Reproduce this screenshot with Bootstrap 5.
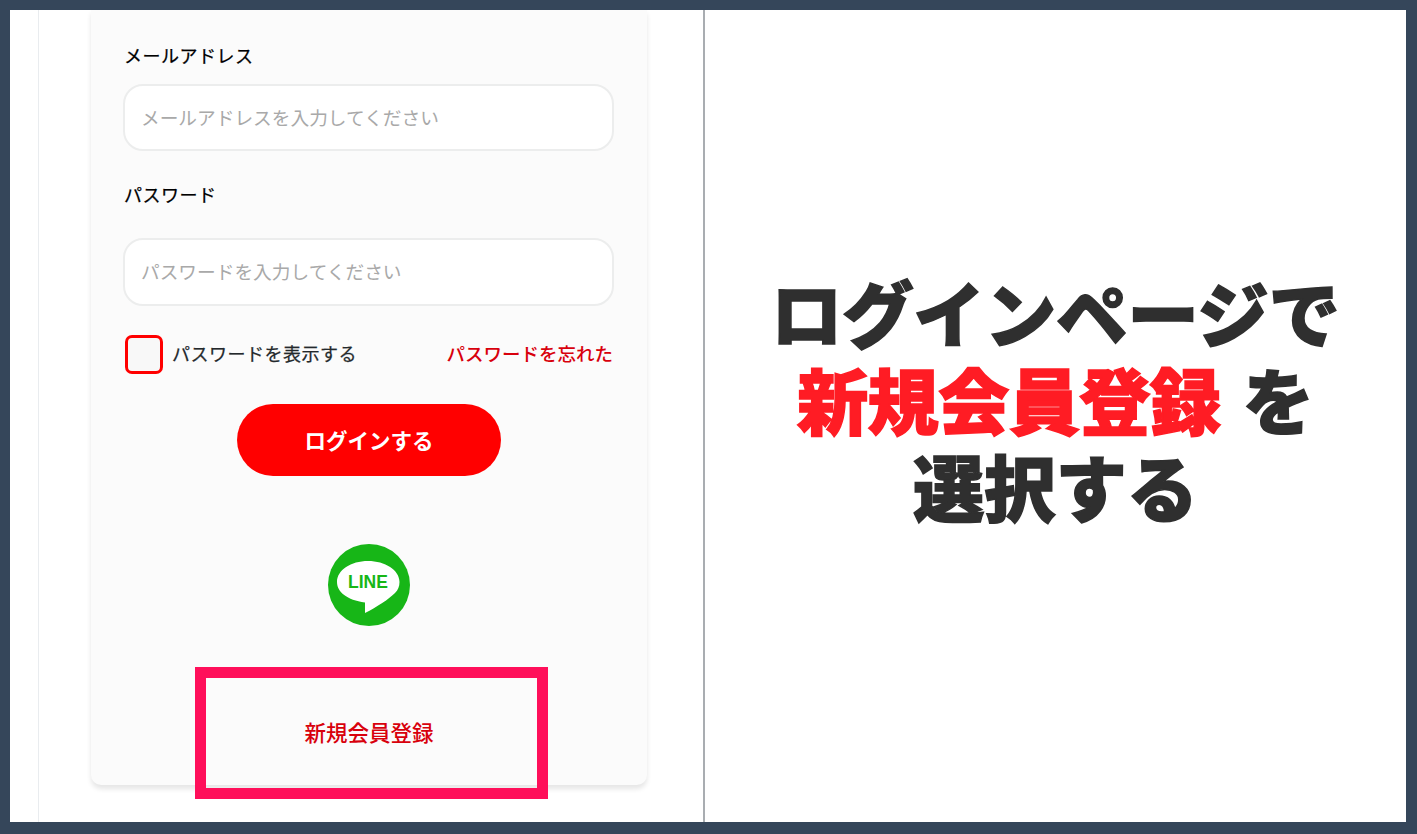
<!DOCTYPE html>
<html lang="ja">
<head>
<meta charset="utf-8">
<title>ログインページで新規会員登録を選択する</title>
<link href="https://cdn.jsdelivr.net/npm/bootstrap@5.3.0/dist/css/bootstrap.min.css" rel="stylesheet">
<style>
html,body{height:100%;}
body{background:#35465a;font-family:"Noto Sans CJK JP","Liberation Sans",sans-serif;overflow:hidden;}
.frame{height:834px;padding:10px 11px 12px 10px;}
.sheet{height:100%;background:#fff;}
.shot{width:695px;flex:none;border-right:2px solid #a9adb1;position:relative;overflow:hidden;padding-left:28px;}
.shot-inner{height:100%;border-left:1px solid #e9ecef;padding-left:52px;}
.login-card{width:556px;height:775px;background:#fbfbfb;border:0;border-radius:0 0 10px 10px;box-shadow:0 4px 5px rgba(0,0,0,.1);padding:32px 33px 38px;}
.f-label{font-size:18px;line-height:27px;letter-spacing:.5px;color:#000;-webkit-text-stroke:.25px #000;margin:0 0 15px;}
.f-label.second{margin:30px 0 30px;}
.f-input.form-control{width:491px;height:67px;margin-left:-1px;border-radius:20px;border:2px solid #eceded;background:#fff;font-size:18.7px;padding:0 16px 3px;box-shadow:none;}
.f-input.form-control.tall{height:68px;}
.f-input::placeholder{color:#a9a9a9;opacity:1;}
.opts{margin-top:29px;height:39px;}
.chk.form-check-input{width:38px;height:39px;margin:0 9px 0 1px;border:3px solid #ff0000;border-radius:7px;background-color:#f8f8f8;float:none;}
.chk-text{font-size:18px;letter-spacing:.5px;color:#24292c;-webkit-text-stroke:.25px #24292c;margin:0 0 2px;}
.forgot{font-size:18.5px;color:#d8000c;text-decoration:none;font-weight:500;margin:0 1px 2px 0;}
.login-btn.btn{display:block;width:264px;height:72px;margin:30px auto 0;border:0;border-radius:36px;background:#ff0000;color:#fff;font-size:21.5px;font-weight:700;padding:0;}
.line-ico{display:block;width:84px;height:84px;margin:67px auto 0;}
.reg{margin-top:91px;line-height:27px;font-size:21.5px;color:#d8000c;font-weight:500;text-decoration:none;display:block;text-align:center;}
.mark-box{position:absolute;left:185px;top:657px;width:353px;height:132px;border:11px solid #ff0f5a;}
.side{flex:1 1 auto;}
.headline{font-size:71.3px;line-height:87px;font-weight:900;color:#2f2f2f;text-align:center;margin:0;padding-bottom:36px;-webkit-text-stroke:1.5px currentColor;}
.head-line{display:block;}
.headline em{font-style:normal;color:#ff1c24;letter-spacing:-.7px;margin-right:6px;}
</style>
</head>
<body>
<div class="frame">
  <div class="sheet d-flex">
    <div class="shot">
      <div class="shot-inner">
        <form class="login-card card">
          <label class="f-label" for="m">メールアドレス</label>
          <input class="f-input form-control" id="m" type="text" placeholder="メールアドレスを入力してください">
          <label class="f-label second" for="p">パスワード</label>
          <input class="f-input form-control tall" id="p" type="text" placeholder="パスワードを入力してください">
          <div class="opts d-flex align-items-center justify-content-between">
            <div class="d-flex align-items-center">
              <input class="chk form-check-input" type="checkbox" id="s">
              <label class="chk-text" for="s">パスワードを表示する</label>
            </div>
            <a class="forgot" href="#">パスワードを忘れた</a>
          </div>
          <button class="login-btn btn" type="button">ログインする</button>
          <svg class="line-ico" viewBox="0 0 84 84" role="img" aria-label="LINE">
            <circle cx="42" cy="42" r="41" fill="#17b617"/>
            <path d="M41 18C24 18 10 27 10 39C10 49 20 57 38 59.500L38 70C50 64 62 56 68 50C71 47 72.500 43.500 72.500 39C72.500 27 58 18 41 18Z" fill="#fff"/>
            <text x="41" y="44.500" text-anchor="middle" font-family="Liberation Sans, sans-serif" font-weight="700" font-size="17.500" fill="#17b617">LINE</text>
          </svg>
          <a class="reg" href="#">新規会員登録</a>
        </form>
      </div>
      <div class="mark-box"></div>
    </div>
    <div class="side d-flex align-items-center justify-content-center">
      <h1 class="headline"><span class="head-line">ログインページで</span><span class="head-line"><em>新規会員登録</em> を</span><span class="head-line">選択する</span></h1>
    </div>
  </div>
</div>
<script src="https://cdn.jsdelivr.net/npm/bootstrap@5.3.0/dist/js/bootstrap.bundle.min.js"></script>
</body>
</html>
